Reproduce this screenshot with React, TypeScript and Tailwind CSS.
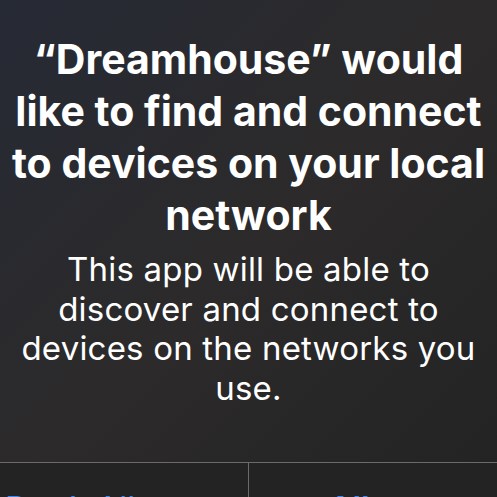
import React from 'react';

const App: React.FC = () => {
  return (
    <div className="w-[497px] h-[497px] overflow-hidden bg-gradient-to-br from-[#262a35] via-[#2c2a2a] to-[#232323] text-white font-['Inter','Liberation_Sans',sans-serif] flex flex-col">
      <div className="pt-[33px] px-1 text-center">
        <h1 className="text-[41px] leading-[52px] font-bold tracking-[0px]">
          “Dreamhouse” would
          <br />
          like to find and connect
          <br />
          to devices on your local
          <br />
          network
        </h1>
        <p className="mt-[9px] text-[33px] leading-[39.5px] font-normal tracking-[0.2px]">
          This app will be able to
          <br />
          discover and connect to
          <br />
          devices on the networks you
          <br />
          use.
        </p>
      </div>
      <div className="mt-auto h-[35px] border-t border-[#6b6b6b] grid grid-cols-2 bg-[#232323] overflow-hidden">
        <div className="border-r border-[#6b6b6b] pl-[5px] pt-[25px] text-[33px] leading-[40px] text-[#3d8af7] whitespace-nowrap">
          Don’t Allow
        </div>
        <div className="pt-[25px] text-center text-[33px] leading-[40px] font-semibold text-[#3d8af7] whitespace-nowrap">
          Allow
        </div>
      </div>
    </div>
  );
};

export default App;
